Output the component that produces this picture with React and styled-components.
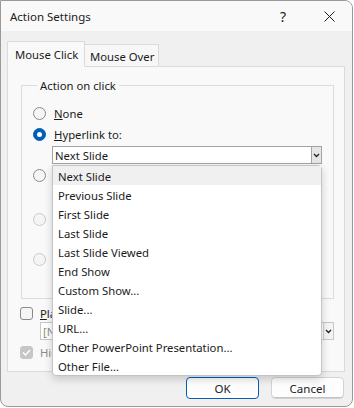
import React from 'react'
import styled, { createGlobalStyle } from 'styled-components'

const GlobalStyle = createGlobalStyle`
  html, body { margin: 0; padding: 0; background: #ffffff; }
  body { font-family: "Noto Sans", "Open Sans", sans-serif; font-size: 11.3px; color: #1b1b1b; }
  * { box-sizing: border-box; }
`

const Window = styled.div`
  position: relative;
  width: 353px;
  height: 407px;
  border: 1px solid #9a9a9a;
  border-radius: 0 8px 8px 8px;
  background: #f0f0f0;
  overflow: hidden;
  display: flex;
  flex-direction: column;
`

const TitleBar = styled.div`
  height: 30px;
  background: #f9f9f9;
  display: flex;
  align-items: center;
  padding-left: 9px;
`
const Title = styled.div`
  flex: 1;
  font-size: 11.5px;
`
const TitleButton = styled.div`
  width: 46px;
  height: 30px;
  display: flex;
  align-items: center;
  justify-content: center;
  font-size: 14px;
`

const Body = styled.div`
  flex: 1;
  padding: 10px 8px 0 6px;
  display: flex;
  flex-direction: column;
`

const Tabs = styled.div`
  display: flex;
  align-items: flex-end;
  height: 25px;
  position: relative;
  z-index: 1;
`
const Tab = styled.div`
  height: ${p => (p.$active ? '26px' : '22px')};
  width: ${p => p.$w}px;
  padding-left: ${p => (p.$active ? '7px' : '5px')};
  display: flex;
  align-items: center;
  background: ${p => (p.$active ? '#f9f9f9' : '#f7f7f7')};
  border: 1px solid #dadada;
  border-bottom: ${p => (p.$active ? '1px solid #f9f9f9' : 'none')};
  margin-bottom: ${p => (p.$active ? '-1px' : '0')};
  margin-left: ${p => (p.$active ? '0' : '-1px')};
  padding-top: ${p => (p.$active ? '0' : '2px')};
`

const Panel = styled.div`
  height: 306px;
  width: 338px;
  background: #f9f9f9;
  border: 1px solid #dadada;
  padding: 0 10px 0 13px;
  display: flex;
  flex-direction: column;
`

const Group = styled.fieldset`
  margin: 11px 0 0 0;
  padding: 0 0 0 11px;
  border: 1px solid #dcdcdc;
  height: 221px;
  width: 313px;
  min-width: 0;
  display: flex;
  flex-direction: column;
`
const Legend = styled.legend`
  padding: 0 3px;
  margin-left: 4px;
`

const OptionRow = styled.div`
  display: flex;
  align-items: center;
  height: 20px;
  margin-top: ${p => p.$mt || 0}px;
  color: ${p => (p.$disabled ? '#8d8d8d' : 'inherit')};
  gap: 8px;
`

const Radio = styled.span`
  width: 13px;
  height: 13px;
  border-radius: 50%;
  flex: none;
  display: flex;
  align-items: center;
  justify-content: center;
  border: 1px solid ${p => (p.$checked ? '#005fb8' : p.$disabled ? '#c9c9c9' : '#8a8a8a')};
  background: ${p => (p.$checked ? '#005fb8' : '#f5f5f5')};
  &::after {
    content: '';
    display: ${p => (p.$checked ? 'block' : 'none')};
    width: 5px;
    height: 5px;
    border-radius: 50%;
    background: #fff;
  }
`

const Key = styled.span`
  text-decoration: underline;
`

const Combo = styled.div`
  margin: ${p => p.$m || '0'};
  width: ${p => p.$w}px;
  height: 18px;
  border: 1px solid ${p => (p.$disabled ? '#c8c8c8' : '#a3a3a3')};
  background: #fff;
  display: flex;
  align-items: center;
  color: ${p => (p.$disabled ? '#8d8d8d' : 'inherit')};
`
const ComboText = styled.div`
  flex: 1;
  padding-left: 2px;
  white-space: nowrap;
  overflow: hidden;
`
const ComboArrow = styled.div`
  width: 10px;
  height: 16px;
  background: ${p => (p.$disabled ? '#f4f4f4' : '#e6e6e6')};
  border-left: 1px solid ${p => (p.$disabled ? '#d0d0d0' : '#a3a3a3')};
  display: flex;
  align-items: center;
  justify-content: center;
`

const CheckRow = styled.div`
  display: flex;
  align-items: center;
  height: 16px;
  gap: 7px;
  margin: ${p => p.$m || '0'};
  color: ${p => (p.$disabled ? '#8d8d8d' : 'inherit')};
`
const Check = styled.span`
  width: 13px;
  height: 13px;
  flex: none;
  border-radius: 3px;
  border: 1px solid ${p => (p.$disabled ? '#c6c6c6' : '#8a8a8a')};
  background: ${p => (p.$checked ? '#c6c6c6' : '#f5f5f5')};
  display: flex;
  align-items: center;
  justify-content: center;
`

const Footer = styled.div`
  display: flex;
  justify-content: flex-end;
  gap: 12px;
  margin-top: 5px;
`
const Button = styled.button`
  width: 73px;
  height: 22px;
  font: inherit;
  font-size: 11.5px;
  color: #1b1b1b;
  background: #fdfdfd;
  border-radius: 4px;
  border: 1px solid ${p => (p.$primary ? '#005fb8' : '#d3d3d3')};
  box-shadow: ${p => (p.$primary ? 'inset 0 0 0 1px #ffffff' : 'inset 0 -1px 0 #c2c2c2')};
  padding: 0;
`

const DropList = styled.div`
  position: absolute;
  left: 51px;
  top: 164px;
  width: 270px;
  height: 211px;
  background: #fff;
  border: 1px solid #c4c4c4;
  border-radius: 0 4px 4px 4px;
  box-shadow: 0 3px 8px rgba(0, 0, 0, 0.18);
  z-index: 5;
`
const ListItem = styled.div`
  height: 19px;
  display: flex;
  align-items: center;
  padding-left: 5px;
  padding-top: 2px;
  background: ${p => (p.$hot ? '#f0f0f0' : 'transparent')};
`

const Chevron = () => (
  <svg width="7" height="5" viewBox="0 0 7 5">
    <path d="M1 1 L3.5 3.5 L6 1" fill="none" stroke="#222" strokeWidth="1.3" />
  </svg>
)

const items = [
  'Next Slide',
  'Previous Slide',
  'First Slide',
  'Last Slide',
  'Last Slide Viewed',
  'End Show',
  'Custom Show...',
  'Slide...',
  'URL...',
  'Other PowerPoint Presentation...',
  'Other File...',
]

export default function App() {
  return (
    <Window>
      <GlobalStyle />
      <TitleBar>
        <Title>Action Settings</Title>
        <TitleButton>?</TitleButton>
        <TitleButton>
          <svg width="11" height="11" viewBox="0 0 11 11">
            <path d="M0.5 0.5 L10.5 10.5 M10.5 0.5 L0.5 10.5" stroke="#1b1b1b" strokeWidth="1" />
          </svg>
        </TitleButton>
      </TitleBar>
      <Body>
        <Tabs>
          <Tab $active $w={78}>Mouse Click</Tab>
          <Tab $w={75}>Mouse Over</Tab>
        </Tabs>
        <Panel>
          <Group>
            <Legend>Action on click</Legend>
            <OptionRow $mt={10}>
              <Radio />
              <span><Key>N</Key>one</span>
            </OptionRow>
            <OptionRow $mt={1}>
              <Radio $checked />
              <span><Key>H</Key>yperlink to:</span>
            </OptionRow>
            <Combo $w={270} $m="2px 0 0 19px">
              <ComboText>Next Slide</ComboText>
              <ComboArrow><Chevron /></ComboArrow>
            </Combo>
            <OptionRow $mt={1}>
              <Radio />
            </OptionRow>
            <OptionRow $mt={24} $disabled>
              <Radio $disabled />
            </OptionRow>
            <OptionRow $mt={20} $disabled>
              <Radio $disabled />
            </OptionRow>
          </Group>
          <CheckRow $m="6px 0 0 -1px">
            <Check />
            <span><Key>P</Key>lay sound:</span>
          </CheckRow>
          <Combo $w={294} $m="1px 0 0 19px" $disabled>
            <ComboText>[No Sound]</ComboText>
            <ComboArrow $disabled><Chevron /></ComboArrow>
          </Combo>
          <CheckRow $m="4px 0 0 -1px" $disabled>
            <Check $checked $disabled>
              <svg width="9" height="7" viewBox="0 0 9 7">
                <path d="M1 3.5 L3.5 6 L8 1" fill="none" stroke="#fff" strokeWidth="1.4" />
              </svg>
            </Check>
            <span>Highlight click</span>
          </CheckRow>
        </Panel>
        <Footer>
          <Button $primary>OK</Button>
          <Button>Cancel</Button>
        </Footer>
      </Body>
      <DropList>
        {items.map((t, i) => (
          <ListItem key={t} $hot={i === 0}>{t}</ListItem>
        ))}
      </DropList>
    </Window>
  )
}
